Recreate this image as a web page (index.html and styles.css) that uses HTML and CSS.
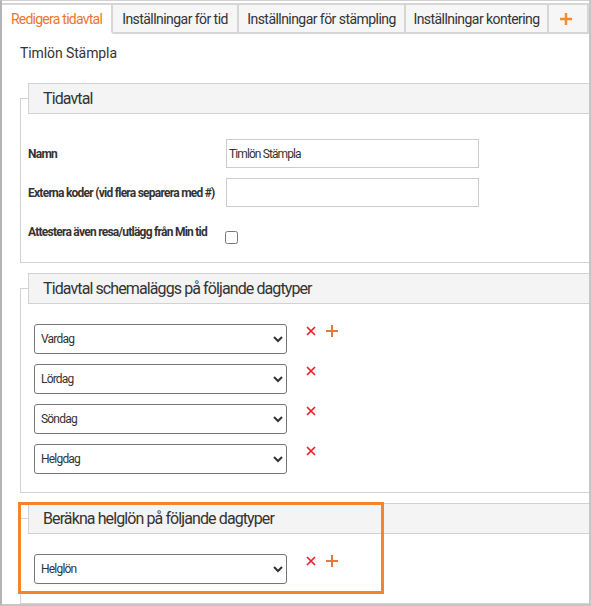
FILE: index.html
```html
<!DOCTYPE html>
<html lang="sv">
<head>
<meta charset="utf-8">
<title>Redigera tidavtal</title>
<link rel="stylesheet" href="styles.css">
</head>
<body>
<div class="frame">
  <nav class="tabs">
    <div class="tab tab-edit tab-active">Redigera tidavtal</div>
    <div class="tab tab-time">Inställningar för tid</div>
    <div class="tab tab-stamp">Inställningar för stämpling</div>
    <div class="tab tab-account">Inställningar kontering</div>
    <div class="tab tab-add">
      <svg class="icon-tab-plus" width="12" height="12" viewBox="0 0 12 12"><path d="M6 0V12M0 6H12" /></svg>
    </div>
  </nav>
  <div class="content">
    <div class="title">Timlön Stämpla</div>

    <fieldset class="panel panel-info">
      <legend>Tidavtal</legend>
      <div class="form">
        <label class="lbl" for="namn">Namn</label>
        <input class="txt" id="namn" type="text" value="Timlön Stämpla">
        <label class="lbl" for="ext">Externa koder (vid flera separera med #)</label>
        <input class="txt" id="ext" type="text" value="">
        <label class="lbl" for="att">Attestera även resa/utlägg från Min tid</label>
        <input class="chk" id="att" type="checkbox">
      </div>
    </fieldset>

    <fieldset class="panel panel-days">
      <legend>Tidavtal schemaläggs på följande dagtyper</legend>
      <div class="rows">
        <div class="row">
          <select class="sel"><option>Vardag</option></select>
          <div class="actions">
            <svg class="icon-x" width="10" height="10" viewBox="0 0 10 10"><path d="M1 1L9 9M9 1L1 9" /></svg>
            <svg class="icon-plus" width="12" height="12" viewBox="0 0 12 12"><path d="M6 0V12M0 6H12" /></svg>
          </div>
        </div>
        <div class="row">
          <select class="sel"><option>Lördag</option></select>
          <div class="actions">
            <svg class="icon-x" width="10" height="10" viewBox="0 0 10 10"><path d="M1 1L9 9M9 1L1 9" /></svg>
          </div>
        </div>
        <div class="row">
          <select class="sel"><option>Söndag</option></select>
          <div class="actions">
            <svg class="icon-x" width="10" height="10" viewBox="0 0 10 10"><path d="M1 1L9 9M9 1L1 9" /></svg>
          </div>
        </div>
        <div class="row">
          <select class="sel"><option>Helgdag</option></select>
          <div class="actions">
            <svg class="icon-x" width="10" height="10" viewBox="0 0 10 10"><path d="M1 1L9 9M9 1L1 9" /></svg>
          </div>
        </div>
      </div>
    </fieldset>

    <fieldset class="panel panel-holiday">
      <legend>Beräkna helglön på följande dagtyper</legend>
      <div class="rows">
        <div class="row">
          <select class="sel"><option>Helglön</option></select>
          <div class="actions">
            <svg class="icon-x" width="10" height="10" viewBox="0 0 10 10"><path d="M1 1L9 9M9 1L1 9" /></svg>
            <svg class="icon-plus" width="12" height="12" viewBox="0 0 12 12"><path d="M6 0V12M0 6H12" /></svg>
          </div>
        </div>
      </div>
    </fieldset>
  </div>
  <div class="highlight"></div>
</div>
</body>
</html>
```
FILE: styles.css
```css
* { box-sizing: border-box; }
html, body { margin: 0; padding: 0; background: #fff; }
body { font-family: Roboto, "Liberation Sans", sans-serif; color: #333; }

.frame {
  width: 591px;
  height: 606px;
  border: 2px solid #c6c6c6;
  border-top: 1px solid #d0d0d0;
  border-left-color: #b4b4b4;
  position: relative;
  overflow: hidden;
}

/* tabs */
.tabs { display: flex; margin-top: 2px; height: 31px; }
.tab {
  height: 31px;
  border-top: 2px solid #d6d6d6;
  border-right: 2px solid #d6d6d6;
  border-bottom: 2px solid #d6d6d6;
  background: #f6f6f6;
  font-size: 14px;
  letter-spacing: -0.55px;
  color: #333;
  display: flex;
  align-items: center;
  justify-content: center;
  white-space: nowrap;
}
.tab-active { background: #fff; border-bottom-color: #fff; color: #e8772e; letter-spacing: -0.75px; }
.tab-edit { width: 111px; }
.tab-time { width: 126px; }
.tab-stamp { width: 167px; }
.tab-account { width: 143px; }
.tab-add { flex: 1; justify-content: flex-start; padding-left: 11px; }
.icon-tab-plus path { stroke: #f28a2e; stroke-width: 2.4; fill: none; }

/* content */
.content { padding-left: 18px; }
.title { margin-top: 9px; font-size: 14px; line-height: 20px; letter-spacing: -0.1px; }

.panel {
  margin: 10px -14px 0 0;
  border: 1px solid #d2d2d2;
  min-width: 0;
}
.panel legend {
  width: 600px;
  height: 31px;
  padding: 0 14px;
  background: #f4f4f4;
  border: 1px solid #d2d2d2;
  font-size: 16px;
  line-height: 29px;
  letter-spacing: -0.9px;
  color: #333;
  white-space: nowrap;
}
.panel-info { margin-top: 20px; padding: 25px 7px 16px; }
.panel-days { padding: 20px 7px 18px; }
.panel-holiday { padding: 20px 7px 19px; }

/* form */
.form {
  display: grid;
  grid-template-columns: 198px 253px;
  grid-auto-rows: 29px;
  row-gap: 10px;
  align-items: center;
}
.lbl {
  font-weight: bold;
  font-size: 12px;
  letter-spacing: -0.75px;
  color: #333;
  white-space: nowrap;
}
.txt {
  width: 253px;
  height: 29px;
  margin: 0;
  border: 1px solid #cccccc;
  border-radius: 0;
  padding: 0 2px;
  font-family: Roboto, "Liberation Sans", sans-serif;
  font-size: 12px;
  letter-spacing: -0.9px;
  color: #333;
  outline: none;
}
.chk { align-self: start; margin: 14px 0 0 -1px; width: 13px; height: 13px; }

/* select rows */
.rows { display: flex; flex-direction: column; gap: 10px; margin-left: 6px; }
.row { display: flex; align-items: flex-start; }
.sel {
  width: 253px;
  height: 30px;
  margin: 0;
  border: 1px solid #767676;
  border-radius: 3px;
  background-color: #fff;
  padding: 0 2px;
  font-family: Roboto, "Liberation Sans", sans-serif;
  font-size: 12px;
  letter-spacing: -0.8px;
  color: #333;
}
.actions { display: flex; align-items: flex-start; gap: 10px; margin-left: 19px; }
.icon-x { margin-top: 2px; }
.icon-x path { stroke: #e8202a; stroke-width: 1.7; fill: none; }
.icon-plus { margin-top: 1px; }
.icon-plus path { stroke: #e27a3d; stroke-width: 2; fill: none; }

/* highlight overlay */
.highlight {
  position: absolute;
  left: 16px;
  top: 501px;
  width: 366px;
  height: 92px;
  border: 3px solid #f6842c;
  pointer-events: none;
}
```
